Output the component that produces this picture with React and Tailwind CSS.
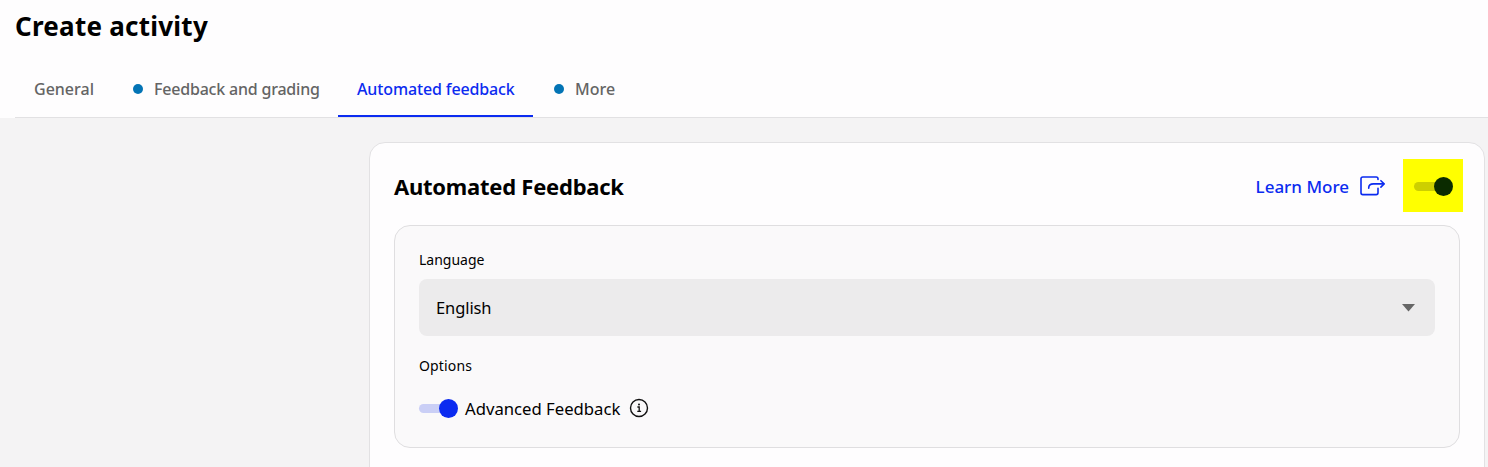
import React, { useState } from "react";

const tabs = [
    { id: "general", label: "General", dot: false, style: "w-[98px]" },
    { id: "grading", label: "Feedback and grading", dot: true, style: "w-[225px] tracking-[-0.2px]" },
    { id: "automated", label: "Automated feedback", dot: false, style: "w-[195px] tracking-[-0.13px]" },
    { id: "more", label: "More", dot: true, style: "w-[101px] ml-px" },
];

const ShareIcon = () => (
    <svg width="26" height="20" viewBox="0 0 26 20" fill="none" stroke="#0b2bf0" strokeWidth="1.6" strokeLinecap="round" strokeLinejoin="round">
        <path d="M18 3.500V2.800A1.800 1.800 0 0 0 16.200 1H2.800A1.800 1.800 0 0 0 1 2.800v14a1.800 1.800 0 0 0 1.800 1.800H16.200a1.800 1.800 0 0 0 1.800-1.800v-4.600" />
        <path d="M8.700 12.300V12C8.700 9.300 10.700 7.900 13.500 7.900h10.200" />
        <path d="M20.900 4.700 24.100 7.900l-3.200 3.200" />
    </svg>
);

const InfoIcon = () => (
    <svg width="20" height="20" viewBox="0 0 20 20" fill="none" stroke="#111" strokeWidth="1.400">
        <circle cx="10" cy="10" r="8.500" />
        <path d="M8.400 9h1.800v4M8.300 13.300h3.800" strokeWidth="1.300" />
        <circle cx="10" cy="6.500" r="1" fill="#111" stroke="none" />
    </svg>
);

const Switch = ({ checked, onChange, label, track, thumb }) => (
    <button type="button" role="switch" aria-checked={checked} aria-label={label} onClick={onChange} className="relative flex items-center w-[39px] h-[19px]">
        <span className={`w-[34px] h-[9px] rounded-full ${track}`} />
        <span className={`absolute top-0 size-[19px] rounded-full ${checked ? "right-0" : "left-0"} ${thumb}`} />
    </button>
);

const App = () => {
    const [activeTab, setActiveTab] = useState("automated");
    const [enabled, setEnabled] = useState(true);
    const [advanced, setAdvanced] = useState(true);

    return (
        <div className="h-screen overflow-hidden flex flex-col bg-[#f4f3f4] text-black font-['Noto_Sans',sans-serif]">
            <header className="h-[118px] shrink-0 bg-[#fefdfe] pl-[15px] flex flex-col justify-between">
                <h1 className="pt-[8px] text-[26px] leading-9 font-bold tracking-[0.25px]">Create activity</h1>
                <nav className="flex h-[57px] border-b border-[#e2e1e3]">
                    {tabs.map((tab) => (
                        <button
                            key={tab.id}
                            type="button"
                            onClick={() => setActiveTab(tab.id)}
                            className={`flex items-center h-[56px] pl-[19px] pt-[2px] border-b-2 text-base font-medium whitespace-nowrap ${tab.style} ${activeTab === tab.id ? "border-[#0b2bf0] text-[#0b2bf0]" : "border-transparent text-[#646464]"}`}
                        >
                            {tab.dot && <span className="size-[10px] rounded-full bg-[#0374b5] ml-[1px] mr-[11px]" />}
                            {tab.label}
                        </button>
                    ))}
                </nav>
            </header>

            <main className="flex-1 pt-6 pl-[369px] pr-[3px]">
                <section className="h-[400px] border border-[#e2e1e3] rounded-2xl bg-[#fefdfe] pl-6 pr-6 pt-4">
                    <div className="flex items-center justify-between h-[53px]">
                        <h2 className="text-[22px] leading-8 font-bold tracking-[-0.24px]">Automated Feedback</h2>
                        <div className="flex items-center -mr-[3px]">
                            <a href="#" className="flex items-center gap-[11px] mr-[17px] text-[17px] font-medium text-[#0b2bf0]">
                                <span className="pt-[2px]">Learn More</span>
                                <ShareIcon />
                            </a>
                            <div className="w-[60px] h-[53px] pl-[11px] pt-[2px] flex items-center bg-[#ffff00]">
                                <Switch checked={enabled} onChange={() => setEnabled(!enabled)} label="Automated Feedback" track="bg-[#cdcf00]" thumb="bg-[#0b2b00]" />
                            </div>
                        </div>
                    </div>

                    <div className="mt-[13px] h-[223px] border border-[#dfdee0] rounded-2xl bg-[#faf9fa] px-6 pt-6">
                        <p className="text-sm leading-5">Language</p>
                        <button type="button" className="mt-[9px] w-full h-[57px] rounded-lg bg-[#ecebec] pl-[17px] pr-[20px] flex items-center justify-between text-[16.5px]">
                            <span className="pt-[2px] tracking-[-0.1px]">English</span>
                            <svg width="13" height="8" viewBox="0 0 13 8">
                                <path d="M0 0h13L6.500 7.500z" fill="#666" />
                            </svg>
                        </button>
                        <p className="mt-5 text-sm leading-5 tracking-[0.15px]">Options</p>
                        <div className="mt-5 flex items-center h-6">
                            <Switch checked={advanced} onChange={() => setAdvanced(!advanced)} label="Advanced Feedback" track="bg-[#cacff6]" thumb="bg-[#0b2bf0]" />
                            <span className="ml-[7px] mr-[9px] pt-[2px] text-[16.7px]">Advanced Feedback</span>
                            <InfoIcon />
                        </div>
                    </div>
                </section>
            </main>
        </div>
    );
};

export default App;
